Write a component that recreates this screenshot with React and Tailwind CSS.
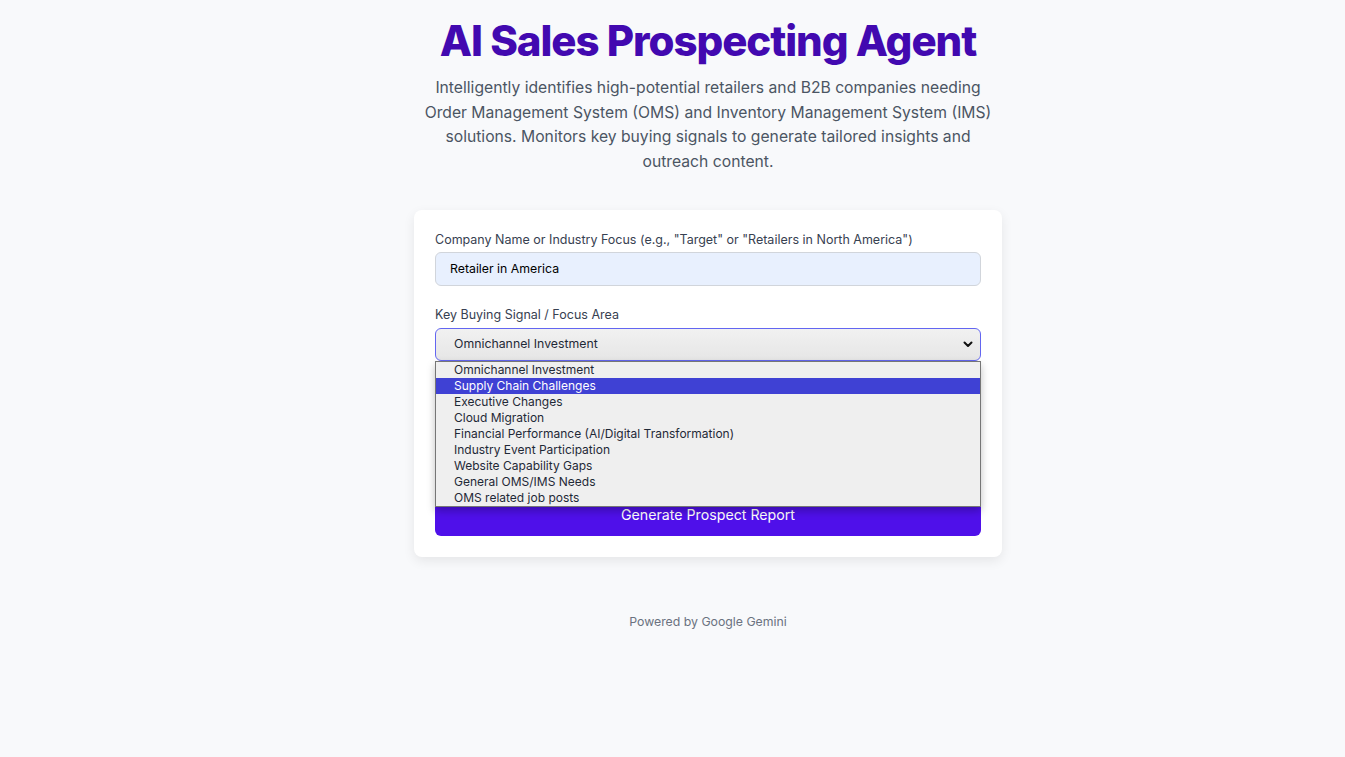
import React, { useState } from 'react';

const SIGNALS = [
  'Omnichannel Investment',
  'Supply Chain Challenges',
  'Executive Changes',
  'Cloud Migration',
  'Financial Performance (AI/Digital Transformation)',
  'Industry Event Participation',
  'Website Capability Gaps',
  'General OMS/IMS Needs',
  'OMS related job posts',
];

const App = () => {
  const [company, setCompany] = useState('Retailer in America');
  const [signal] = useState(SIGNALS[0]);
  const hovered = 1;

  return (
    <div className="min-h-screen bg-[#f8f9fb] font-['Inter',sans-serif]">
      <div className="flex flex-col items-center pl-[71px] pt-[16px]">
        <h1 className="text-[42px] leading-[50px] font-extrabold tracking-tight text-[#4209b0]">
          AI Sales Prospecting Agent
        </h1>
        <p className="mt-[10px] w-[580px] text-center text-[15.7px] leading-[24.7px] text-[#4b5563]">
          Intelligently identifies high-potential retailers and B2B companies needing Order Management System (OMS) and Inventory Management System (IMS) solutions. Monitors key buying signals to generate tailored insights and outreach content.
        </p>

        <div className="mt-[35px] w-[588px] rounded-lg bg-white p-[21px] shadow-[0_4px_12px_rgba(0,0,0,0.08)]">
          <label className="block text-[12.5px] leading-[18px] text-[#374151]">
            Company Name or Industry Focus (e.g., "Target" or "Retailers in North America")
          </label>
          <input
            type="text"
            value={company}
            onChange={(e) => setCompany(e.target.value)}
            className="mt-[3px] block h-[34px] w-full rounded-md border border-[#d1d5db] bg-[#e8f0fe] px-[14px] text-[12.3px] text-black outline-none"
          />

          <label className="mt-[20px] block text-[12.5px] leading-[18px] text-[#374151]">
            Key Buying Signal / Focus Area
          </label>
          <div className="relative mt-[4px]">
            <div className="flex h-[33px] w-full items-center justify-between rounded-md border border-[#6366f1] bg-gradient-to-b from-[#f1f1f1] to-[#e6e6e6] pl-[18px] pr-[6px] text-[12.3px] text-[#1f2937]">
              <span>{signal}</span>
              <svg width="12" height="12" viewBox="0 0 24 24" fill="none" stroke="#111" strokeWidth="4" strokeLinecap="round" strokeLinejoin="round">
                <path d="M5 9l7 7 7-7" />
              </svg>
            </div>
            <ul className="absolute left-0 top-[33px] z-10 w-full border border-[#767676] bg-[#efefef] text-[12px] text-[#1f2937] shadow-[0_4px_8px_rgba(0,0,0,0.25)]">
              {SIGNALS.map((s, i) => (
                <li
                  key={s}
                  className={i === hovered ? 'h-[16px] bg-[#3f41d4] pl-[18px] leading-[16px] text-white' : 'h-[16px] pl-[18px] leading-[16px]'}
                >
                  {s}
                </li>
              ))}
            </ul>
          </div>

          <label className="mt-[24px] block text-[12.5px] leading-[18px] text-[#374151]">
            Additional Context (optional)
          </label>
          <textarea
            rows={2}
            className="mt-[5px] block h-[60px] w-full resize-none rounded-md border border-[#d1d5db] bg-white px-[14px] text-[12.3px]"
          />

          <button
            type="button"
            className="mt-[26px] flex h-[42px] w-full items-center justify-center rounded-md bg-[#4f10ea] text-[14.2px] text-white"
          >
            Generate Prospect Report
          </button>
        </div>

        <p className="mt-[56px] text-[12.3px] text-[#6b7280]">Powered by Google Gemini</p>
      </div>
    </div>
  );
};

export default App;
